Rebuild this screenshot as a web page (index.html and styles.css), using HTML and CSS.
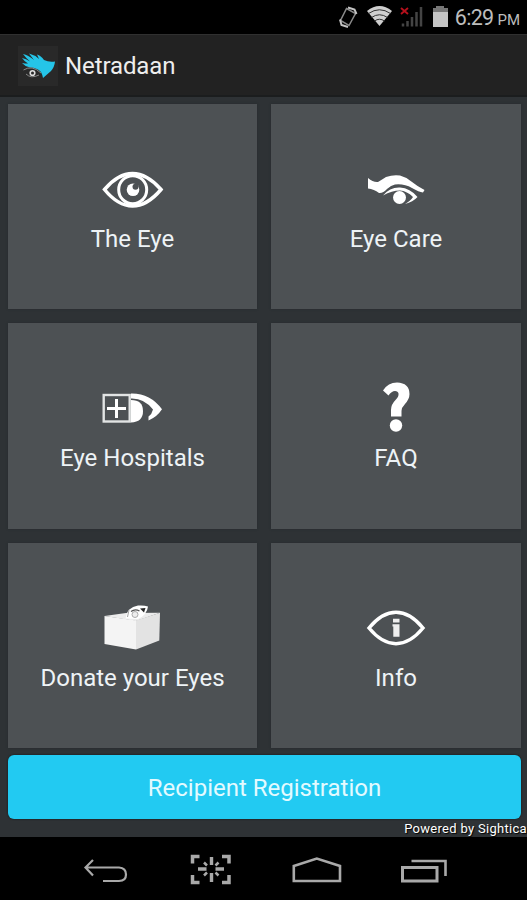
FILE: index.html
```html
<!DOCTYPE html>
<html lang="en">
<head>
    <meta charset="UTF-8">
    <meta name="viewport" content="width=device-width, initial-scale=1.0">
    <title>Netradaan</title>
    <link rel="stylesheet" href="styles.css">
</head>
<body>
    <div class="status-bar">
        <svg class="status-icons" width="120" height="34" viewBox="330 0 120 34">
            <path d="M345.500 8.500L354.500 13.500L348 25.500L339.500 20.500Z" fill="none" stroke="#8a8a8a" stroke-width="1.500"/>
            <path d="M339 19.500L340.500 25L347 27M347 7.500L353.500 9.500L355.500 14" fill="none" stroke="#c4c4c4" stroke-width="2"/>
            <path d="M366 11Q378.500 1 391 11L378.500 26Z" fill="#cfcfcf"/>
            <path d="M367.500 13.500Q378.500 6 389.500 13.500M370.500 17.500Q378.500 12 386.500 17.500M373.500 21Q378.500 17.500 383.500 21" fill="none" stroke="#333" stroke-width="1"/>
            <path d="M402 26.500V23.500M406.500 26.500V21M411 26.500V17M415.500 26.500V12M420 26.500V7" stroke="#444" stroke-width="2.500"/>
            <path d="M400 8L407 14M407 8L400 14" stroke="#b5101c" stroke-width="1.900"/>
            <path d="M435 6H443V8H447V12H432V8H435Z" fill="#777"/>
            <path d="M432 12H447V27H432Z" fill="#c4c4c4"/>
        </svg>
        <span class="clock">6:29</span>
        <span class="ampm">PM</span>
    </div>

    <div class="header">
        <svg class="logo" width="40" height="40" viewBox="0 0 40 40">
            <rect width="40" height="40" fill="#292929"/>
            <path d="M4 12Q8 12.500 12 15.500Q8 12 5 8Q10 9 16 14L11 7.500Q17 9 21 13L19 8.500Q23 9.500 26 14Q31 16.500 37 15.500Q36.500 21 33 25L25 32Q24.500 29 23 26Q19 21.500 12 21.500Q7 20.500 4 17Q7 17.500 10 17.500Q6 15 4 12Z" fill="#25c5e8"/>
            <path d="M5.500 24Q14 18.500 23 27M8 28Q13 33 21 29" fill="none" stroke="#888" stroke-width="1"/>
            <circle cx="14.500" cy="27" r="2.300" fill="none" stroke="#ddd" stroke-width="1.600"/>
        </svg>
        <span class="title">Netradaan</span>
    </div>

    <div class="content">
        <div class="grid">
            <div class="tile">
                <svg class="icon" viewBox="0 0 64 60">
                    <path d="M3.500 29.500Q17 13.500 31.500 13.500T60 29.500Q46 46 31.500 46T3.500 29.500Z" fill="none" stroke="#fff" stroke-width="3.500"/>
                    <circle cx="31.700" cy="29.700" r="14" fill="none" stroke="#fff" stroke-width="3"/>
                    <circle cx="32" cy="29.700" r="6.300" fill="#fff"/>
                    <circle cx="34.500" cy="26.700" r="3" fill="#4d5154"/>
                </svg>
                <span class="label">The Eye</span>
            </div>
            <div class="tile">
                <svg class="icon" viewBox="0 0 64 60">
                    <path d="M4 18Q9 22.500 14 22Q19 19 22 17Q29 14.500 36 15.500Q42 17 47.700 21.700Q53 26 60.500 30L59 32.500Q55 32 48 28Q40 23.500 31 24.500Q27 25 23 29Q19 33.500 15 33Q10 29 4 28.500Z" fill="#fff"/>
                    <path d="M19 35.500Q26 27 36 27.500Q46 28 53.500 37Q49 42 41 44Q47 40.500 49 37Q43 31 36 30.500Q28 30.500 19 35.500Z" fill="#fff"/>
                    <circle cx="35.500" cy="37.500" r="6.500" fill="#fff"/>
                </svg>
                <span class="label">Eye Care</span>
            </div>
            <div class="tile">
                <svg class="icon" viewBox="0 0 64 60">
                    <rect x="2.700" y="16" width="26" height="26.500" fill="none" stroke="#e2e4e4" stroke-width="2.400"/>
                    <path d="M15.500 20V39M6 29.500H25" stroke="#fff" stroke-width="3"/>
                    <path d="M30 21Q42 21 42 32Q42 43 30 43.500Z" fill="#fff"/>
                    <path d="M30 14.500Q49 14 61 30.300Q56 38 47.500 41.500L47.500 37.500Q51 35 52 30.500Q43 19 30 19.500Z" fill="#fff"/>
                </svg>
                <span class="label">Eye Hospitals</span>
            </div>
            <div class="tile">
                <svg class="icon" viewBox="0 0 64 60">
                    <path d="M19 11.500Q24 3.500 33 3.500Q45.500 4 45.500 15Q45.500 20 41 25Q37.500 28.500 37.500 32V37.500H27V31Q27 25.500 31.500 21Q35 17.500 34.500 14.500Q34 12 31 12Q27.500 12 24.500 16.500Z" fill="#fff"/>
                    <circle cx="32" cy="46.500" r="6.200" fill="#fff"/>
                </svg>
                <span class="label">FAQ</span>
            </div>
            <div class="tile">
                <svg class="icon" viewBox="0 0 64 60">
                    <path d="M3.500 17L25 14L59 13.700L35 22Z" fill="#ececec"/>
                    <path d="M3.500 17L35 21.500V50.500L3.500 45Z" fill="#f4f4f4"/>
                    <path d="M35 21.500L59 13.700L58.300 41.500L35 50.500Z" fill="#e3e3e3"/>
                    <path d="M24.500 19.500Q26 8 37 6.500Q43 6 47 7.500Q46 16 37 20Z" fill="#fff"/>
                    <path d="M30 12.500Q34 9.500 38.500 12" fill="none" stroke="#555" stroke-width="1.300"/>
                    <path d="M39 9.500L44.500 9L43 13.500Z" fill="#222"/>
                    <circle cx="34" cy="15.500" r="3" fill="#eee" stroke="#999" stroke-width=".8"/>
                    <path d="M28 11L26.500 18" stroke="#888" stroke-width=".8"/>
                </svg>
                <span class="label">Donate your Eyes</span>
            </div>
            <div class="tile">
                <svg class="icon" viewBox="0 0 64 60">
                    <path d="M5 29Q18 13.300 32 13.300T59 29Q46 44.700 32 44.700T5 29Z" fill="none" stroke="#fff" stroke-width="3.500"/>
                    <path d="M29 19.700H35.500V23.500H29ZM28.500 25.300H35.500V37.700H29.300V27.500H28.500Z" fill="#eee"/>
                </svg>
                <span class="label">Info</span>
            </div>
        </div>
        <div class="register">Recipient Registration</div>
        <div class="powered">Powered by Sightica</div>
    </div>

    <div class="nav-bar">
        <svg width="527" height="63" viewBox="0 837 527 63" fill="none" stroke="#a9a9a9" stroke-width="2.200">
            <path d="M93 860L85.500 867.500L93 875.500M86 867.500H119Q126 868 126 874.500Q126 881 119 881H103"/>
            <path d="M199.500 856.500H192.500V863.500M222 856.500H229V863.500M192.500 875V882.500H199.500M229 875V882.500H222" stroke-width="3.500"/>
            <path d="M211.500 857V865M211.500 873V882M198 869H206.500M215.500 869H224" stroke-width="3.400"/>
            <path d="M204 862.500L207 865.500M218.500 862.500L215.500 865.500M204 875.500L207 872.500M218.500 875.500L215.500 872.500" stroke-width="2.500"/>
            <path d="M293.800 866L316.800 858.500L340 866V881H293.800Z" stroke-width="2.600"/>
            <path d="M402.500 867.500H437V881H402.500Z" stroke-width="3"/>
            <path d="M411.500 861H445.500V876" stroke-width="2.600"/>
        </svg>
    </div>
</body>
</html>
```

FILE: styles.css
```css
* {
    box-sizing: border-box;
}

body {
    margin: 0;
    width: 527px;
    height: 900px;
    overflow: hidden;
    background: #000;
    font-family: Roboto, "Liberation Sans", sans-serif;
    color: #fff;
}

svg {
    display: block;
}

.status-bar {
    display: flex;
    align-items: baseline;
    justify-content: flex-end;
    height: 34px;
    padding-right: 7px;
    line-height: 36px;
    color: #bdbdbd;
}

.status-icons {
    align-self: flex-start;
    margin-right: 4px;
}

.clock {
    font-size: 21.5px;
    letter-spacing: -0.7px;
    margin-right: 4px;
}

.ampm {
    font-size: 15px;
}

.header {
    display: flex;
    align-items: center;
    height: 63px;
    padding: 2px 0 0 18px;
    background: #222;
    border-top: 1px solid #303030;
    border-bottom: 2px solid #1b1d1e;
}

.title {
    margin-left: 7px;
    font-size: 24px;
    letter-spacing: -0.1px;
    color: #eee;
}

.content {
    height: 740px;
    padding: 7px 6px 0 8px;
    background: #2e3235;
}

.grid {
    display: grid;
    grid-template-columns: 249px 250px;
    grid-template-rows: 205px 206px 205px;
    gap: 14px;
}

.tile {
    display: flex;
    flex-direction: column;
    align-items: center;
    padding-top: 56px;
    background: #4d5154;
    box-shadow: 0 0 2px #272b2d;
}

.icon {
    width: 64px;
    height: 60px;
}

.label {
    margin-top: 5px;
    font-size: 24px;
    line-height: 28px;
    color: #eef3f6;
}

.register {
    height: 64px;
    margin-top: 7px;
    border-radius: 6px;
    background: #22caf2;
    box-shadow: 0 0 2px #111;
    font-size: 24px;
    line-height: 66px;
    text-align: center;
    color: #e3faff;
}

.powered {
    margin-right: -6px;
    font-size: 13px;
    letter-spacing: 0.3px;
    line-height: 19px;
    text-align: right;
    white-space: nowrap;
    text-shadow: 1px 1px 1px #000;
}

.nav-bar {
    height: 63px;
    background: #000;
}
```
